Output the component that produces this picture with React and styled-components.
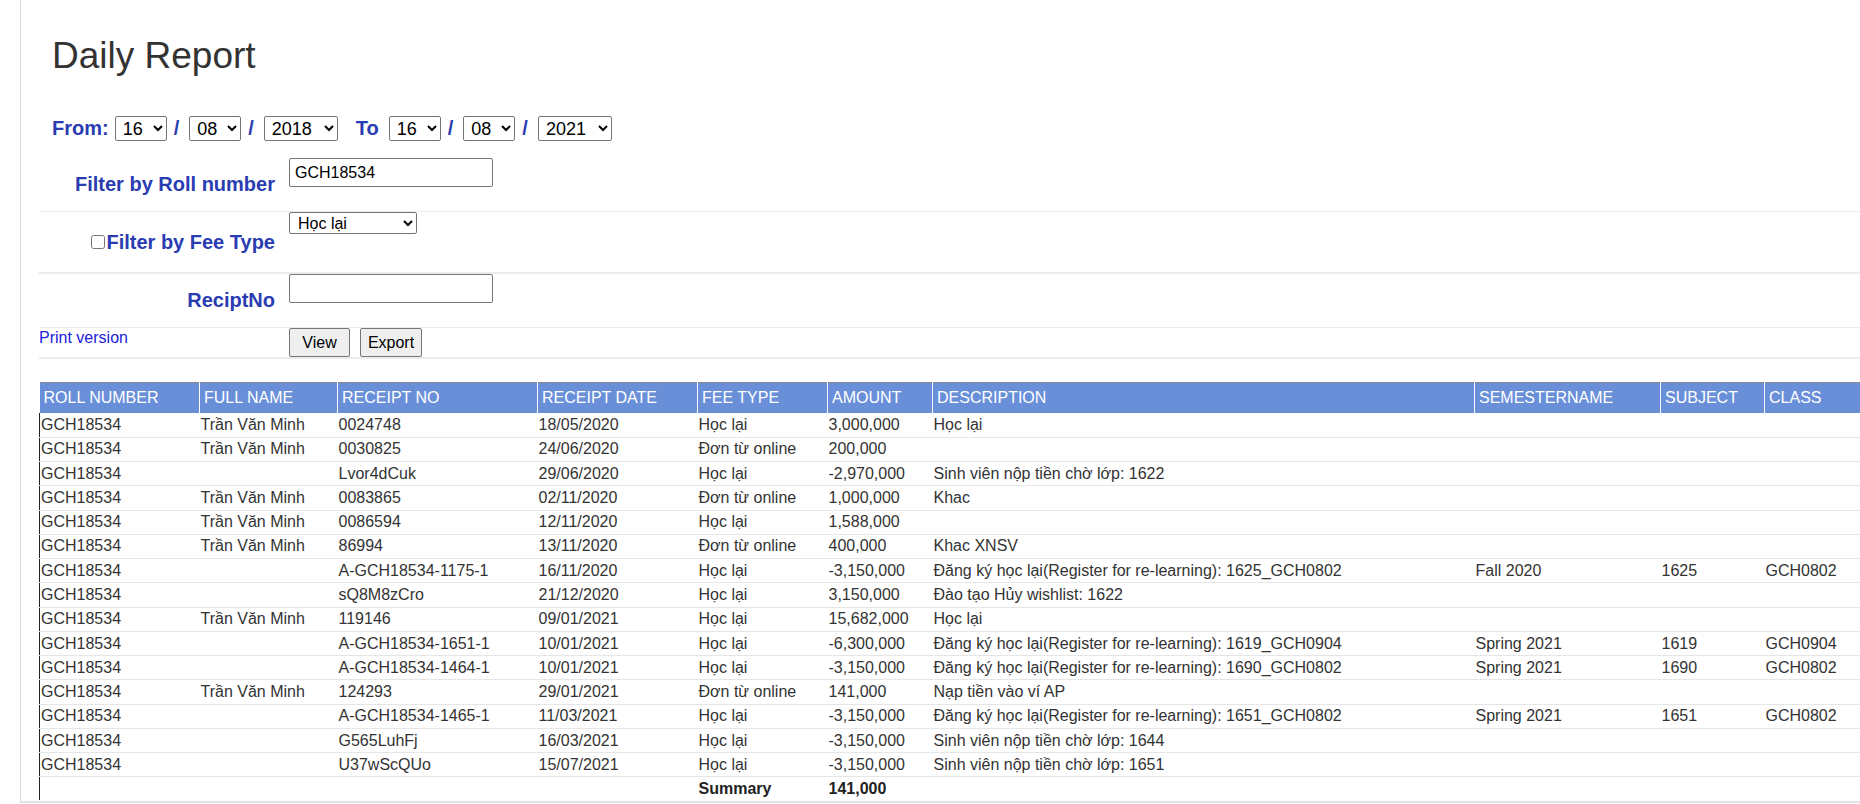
import styled, { createGlobalStyle } from "styled-components";

const GlobalStyle = createGlobalStyle`
  html, body {
    margin: 0;
    padding: 0;
    background: #fff;
    overflow: hidden;
  }
  body {
    font-family: "Liberation Sans", Arial, sans-serif;
    color: #333;
  }
`;

const NAME = "Trần Văn Minh";
const REG = "Đăng ký học lại(Register for re-learning): ";

const rows = [
  ["0024748", NAME, "18/05/2020", "Học lại", "3,000,000", "Học lại"],
  ["0030825", NAME, "24/06/2020", "Đơn từ online", "200,000", ""],
  ["Lvor4dCuk", "", "29/06/2020", "Học lại", "-2,970,000", "Sinh viên nộp tiền chờ lớp: 1622"],
  ["0083865", NAME, "02/11/2020", "Đơn từ online", "1,000,000", "Khac"],
  ["0086594", NAME, "12/11/2020", "Học lại", "1,588,000", ""],
  ["86994", NAME, "13/11/2020", "Đơn từ online", "400,000", "Khac XNSV"],
  ["A-GCH18534-1175-1", "", "16/11/2020", "Học lại", "-3,150,000", REG + "1625_GCH0802", "Fall 2020", "1625", "GCH0802"],
  ["sQ8M8zCro", "", "21/12/2020", "Học lại", "3,150,000", "Đào tạo Hủy wishlist: 1622"],
  ["119146", NAME, "09/01/2021", "Học lại", "15,682,000", "Học lại"],
  ["A-GCH18534-1651-1", "", "10/01/2021", "Học lại", "-6,300,000", REG + "1619_GCH0904", "Spring 2021", "1619", "GCH0904"],
  ["A-GCH18534-1464-1", "", "10/01/2021", "Học lại", "-3,150,000", REG + "1690_GCH0802", "Spring 2021", "1690", "GCH0802"],
  ["124293", NAME, "29/01/2021", "Đơn từ online", "141,000", "Nạp tiền vào ví AP"],
  ["A-GCH18534-1465-1", "", "11/03/2021", "Học lại", "-3,150,000", REG + "1651_GCH0802", "Spring 2021", "1651", "GCH0802"],
  ["G565LuhFj", "", "16/03/2021", "Học lại", "-3,150,000", "Sinh viên nộp tiền chờ lớp: 1644"],
  ["U37wScQUo", "", "15/07/2021", "Học lại", "-3,150,000", "Sinh viên nộp tiền chờ lớp: 1651"],
];

const columns = [
  { title: "ROLL NUMBER", width: 160 },
  { title: "FULL NAME", width: 138 },
  { title: "RECEIPT NO", width: 200 },
  { title: "RECEIPT DATE", width: 160 },
  { title: "FEE TYPE", width: 130 },
  { title: "AMOUNT", width: 105 },
  { title: "DESCRIPTION", width: 542 },
  { title: "SEMESTERNAME", width: 186 },
  { title: "SUBJECT", width: 104 },
  { title: "CLASS", width: 96 },
];

export default function App() {
  return (
    <>
      <GlobalStyle />
      <Page>
        <Title>Daily Report</Title>

        <DateRow>
          <BlueText $right={6}>From:</BlueText>
          <DateSelect defaultValue="16" $w={52}><option>16</option></DateSelect>
          <Slash>/</Slash>
          <DateSelect defaultValue="08" $w={52}><option>08</option></DateSelect>
          <Slash>/</Slash>
          <DateSelect defaultValue="2018" $w={74}><option>2018</option></DateSelect>
          <BlueText $left={18} $right={10}>To</BlueText>
          <DateSelect defaultValue="16" $w={52}><option>16</option></DateSelect>
          <Slash>/</Slash>
          <DateSelect defaultValue="08" $w={52}><option>08</option></DateSelect>
          <Slash>/</Slash>
          <DateSelect defaultValue="2021" $w={74}><option>2021</option></DateSelect>
        </DateRow>

        <FilterForm>
          <FilterRow $h={54} $line={1}>
            <FilterLabel>Filter by Roll number</FilterLabel>
            <Field $top={1}>
              <TextInput defaultValue="GCH18534" />
            </Field>
          </FilterRow>

          <FilterRow $h={60} $line={2}>
            <FilterLabel>
              <Check type="checkbox" />
              Filter by Fee Type
            </FilterLabel>
            <Field>
              <FeeSelect defaultValue="Học lại">
                <option>Học lại</option>
                <option>Đơn từ online</option>
              </FeeSelect>
            </Field>
          </FilterRow>

          <FilterRow $h={53} $line={1}>
            <FilterLabel>ReciptNo</FilterLabel>
            <Field $top={0}>
              <TextInput defaultValue="" />
            </Field>
          </FilterRow>

          <FilterRow $h={29} $line={2}>
            <PrintCell>
              <PrintLink href="#">Print version</PrintLink>
            </PrintCell>
            <ButtonBar>
              <Button $w={61}>View</Button>
              <Button $w={62}>Export</Button>
            </ButtonBar>
          </FilterRow>
        </FilterForm>

        <ReportTable>
          <colgroup>
            {columns.map((c) => (
              <col key={c.title} style={{ width: c.width }} />
            ))}
          </colgroup>
          <thead>
            <tr>
              {columns.map((c) => (
                <HeadCell key={c.title}>{c.title}</HeadCell>
              ))}
            </tr>
          </thead>
          <tbody>
            {rows.map((r, i) => (
              <BodyRow key={i}>
                <Cell>GCH18534</Cell>
                <Cell>{r[1]}</Cell>
                <Cell>{r[0]}</Cell>
                <Cell>{r[2]}</Cell>
                <Cell>{r[3]}</Cell>
                <Cell>{r[4]}</Cell>
                <Cell>{r[5]}</Cell>
                <Cell>{r[6] || ""}</Cell>
                <Cell>{r[7] || ""}</Cell>
                <Cell>{r[8] || ""}</Cell>
              </BodyRow>
            ))}
            <SummaryRow>
              <Cell />
              <Cell />
              <Cell />
              <Cell />
              <Cell $bold>Summary</Cell>
              <Cell $bold>141,000</Cell>
              <Cell />
              <Cell />
              <Cell />
              <Cell />
            </SummaryRow>
          </tbody>
        </ReportTable>
      </Page>
    </>
  );
}

const Page = styled.div`
  margin-left: 20px;
  border-left: 1px solid #dcdcdc;
  border-bottom: 2px solid #e2e2e2;
  padding: 0 0 1px 18px;
`;

const Title = styled.h2`
  margin: 0;
  padding: 35px 0 0 13px;
  font-size: 37px;
  line-height: 42px;
  font-weight: normal;
  color: #333;
`;

const DateRow = styled.div`
  display: flex;
  align-items: center;
  height: 25px;
  margin-top: 39px;
  padding-left: 13px;
`;

const BlueText = styled.span`
  font-size: 20px;
  font-weight: bold;
  color: #2a3cb2;
  margin-left: ${(p) => p.$left || 0}px;
  margin-right: ${(p) => p.$right || 0}px;
`;

const Slash = styled.span`
  font-size: 20px;
  font-weight: bold;
  color: #2a3cb2;
  margin: 0 10px 0 7px;
`;

const DateSelect = styled.select`
  width: ${(p) => p.$w}px;
  height: 25px;
  margin: 0;
  padding: 0 0 0 3px;
  font-family: "Liberation Sans", Arial, sans-serif;
  font-size: 18px;
  color: #000;
  background: #fff;
  border: 1px solid #767676;
  border-radius: 2px;
`;

const FilterForm = styled.div`
  margin-top: 16px;
`;

const FilterRow = styled.div`
  display: grid;
  grid-template-columns: 240px 1fr;
  column-gap: 10px;
  height: ${(p) => p.$h}px;
  border-bottom: ${(p) => p.$line}px solid #ececec;
`;

const FilterLabel = styled.label`
  display: flex;
  align-items: center;
  justify-content: flex-end;
  padding-right: 4px;
  font-size: 20px;
  font-weight: bold;
  color: #2a3cb2;
  white-space: nowrap;
`;

const Check = styled.input`
  width: 14px;
  height: 14px;
  margin: 0 1px 0 0;
`;

const Field = styled.div`
  padding-top: ${(p) => p.$top || 0}px;
`;

const TextInput = styled.input`
  box-sizing: border-box;
  width: 204px;
  height: 29px;
  margin: 0;
  padding: 0 5px;
  font-family: "Liberation Sans", Arial, sans-serif;
  font-size: 16px;
  color: #000;
  border: 1px solid #767676;
  border-radius: 2px;
`;

const FeeSelect = styled.select`
  width: 128px;
  height: 22px;
  margin: 0;
  padding: 0 0 0 4px;
  font-family: "Liberation Sans", Arial, sans-serif;
  font-size: 16px;
  color: #000;
  background: #fff;
  border: 1px solid #767676;
  border-radius: 2px;
`;

const PrintCell = styled.div`
  padding-top: 1px;
`;

const PrintLink = styled.a`
  font-size: 16px;
  color: #2020dc;
  text-decoration: none;
`;

const ButtonBar = styled.div`
  display: flex;
  gap: 10px;
`;

const Button = styled.button`
  box-sizing: border-box;
  width: ${(p) => p.$w}px;
  height: 29px;
  margin: 0;
  padding: 0;
  font-family: "Liberation Sans", Arial, sans-serif;
  font-size: 16px;
  color: #000;
  background: #efefef;
  border: 1px solid #767676;
  border-radius: 2px;
`;

const ReportTable = styled.table`
  width: 1821px;
  margin-top: 23px;
  border-collapse: collapse;
  table-layout: fixed;
  font-size: 16px;
  color: #333;
`;

const HeadCell = styled.th`
  height: 30px;
  padding: 0 4px;
  text-align: left;
  font-weight: normal;
  color: #fff;
  background: #6a8fd9;
  border-top: 1px solid #8a8a8a;
  border-right: 1px solid #fff;
  white-space: nowrap;
  overflow: hidden;
  &:last-child {
    border-right: none;
  }
`;

const Cell = styled.td`
  padding: 0 1px;
  white-space: nowrap;
  overflow: hidden;
  font-weight: ${(p) => (p.$bold ? "bold" : "normal")};
  color: ${(p) => (p.$bold ? "#222" : "#333")};
  &:first-child {
    border-left: 1px solid #222;
  }
  &:last-child {
    border-right: 1px solid #222;
  }
`;

const BodyRow = styled.tr`
  height: 24.27px;
  td {
    border-bottom: 1px solid #e6e6e6;
  }
`;

const SummaryRow = styled.tr`
  height: 23px;
`;
